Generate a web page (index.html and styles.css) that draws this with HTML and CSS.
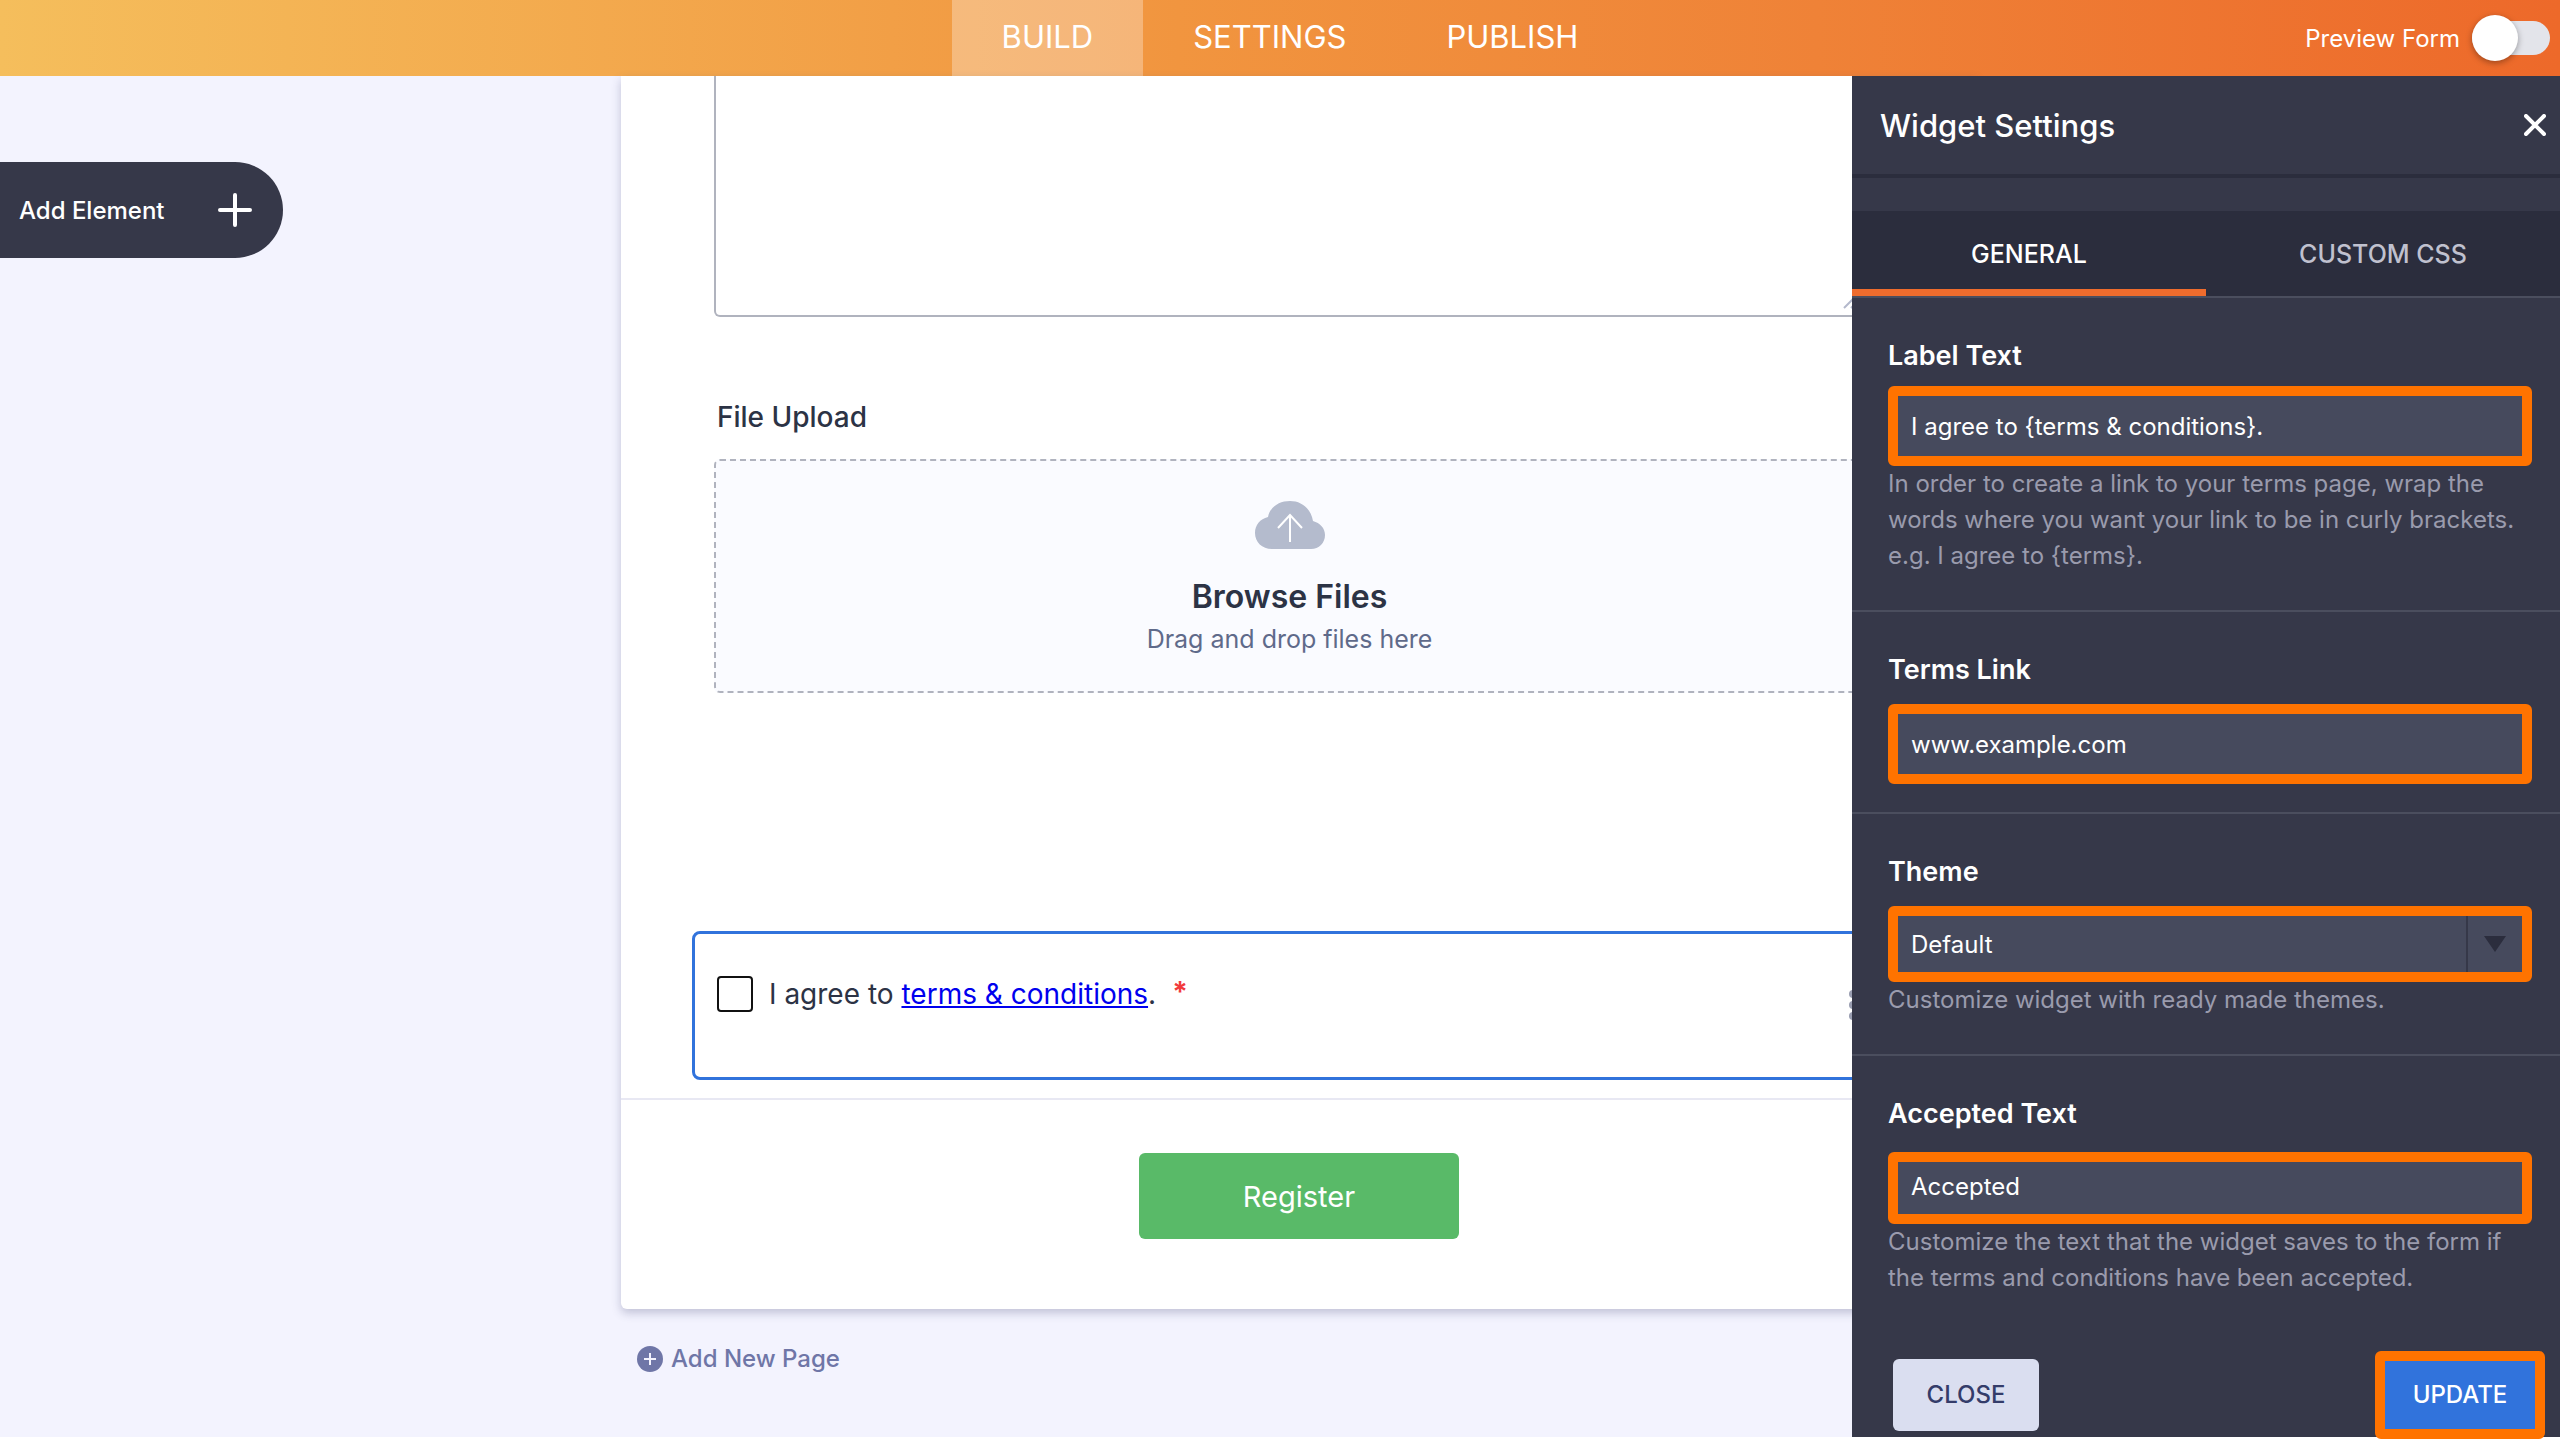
FILE: index.html
```html
<!DOCTYPE html>
<html lang="en">
<head>
    <meta charset="utf-8">
    <title>Form Builder</title>
    <link rel="stylesheet" href="styles.css">
</head>
<body>

    <header class="topbar">
        <nav class="tabs">
            <a href="#build" class="active">BUILD</a>
            <a href="#settings">SETTINGS</a>
            <a href="#publish">PUBLISH</a>
        </nav>
        <div class="preview">
            <label for="preview">Preview Form</label>
            <input type="checkbox" id="preview" class="switch">
        </div>
    </header>

    <main class="workspace">
        <div class="side">
            <button class="add-element">
                Add Element
                <svg width="34" height="34" viewBox="0 0 34 34"><path d="M17 2v30M2 17h30" stroke="#fff" stroke-width="4" stroke-linecap="round"/></svg>
            </button>
        </div>

        <div class="stage">
            <form class="card">
                <div class="questions">
                    <div class="textbox">
                        <textarea aria-label="Comments"></textarea>
                        <svg class="grip" width="20" height="20" viewBox="0 0 20 20"><path d="M1 19L19 1M8 19L19 8" stroke="#b4b9cc" stroke-width="2"/></svg>
                    </div>

                    <div class="question-label">File Upload</div>
                    <div class="dropzone">
                        <svg width="70" height="48" viewBox="0 0 70 48">
                            <path d="M17 48C7 48 0 41 0 32c0-8 5-14 13-16C15 6 24 0 35 0c12 0 21 8 23 20 7 2 12 7 12 14 0 8-6 14-14 14z" fill="#b4bbcd"/>
                            <path d="M35 41V15M23 27l12-13 12 13" fill="none" stroke="#fff" stroke-width="2"/>
                        </svg>
                        <strong>Browse Files</strong>
                        <span>Drag and drop files here</span>
                    </div>

                    <div class="terms">
                        <input type="checkbox" id="agree">
                        <label for="agree">I agree to <a href="#terms">terms &amp; conditions</a>.</label>
                        <span class="required">*</span>
                        <svg class="drag" width="24" height="32" viewBox="0 0 24 32" fill="#9a9eb1">
                            <circle cx="5" cy="5" r="4"/><circle cx="5" cy="16" r="4"/><circle cx="5" cy="27" r="4"/>
                            <circle cx="18" cy="5" r="4"/><circle cx="18" cy="16" r="4"/><circle cx="18" cy="27" r="4"/>
                        </svg>
                    </div>
                </div>
                <div class="submit">
                    <button type="button">Register</button>
                </div>
            </form>

            <button class="add-page">
                <svg width="26" height="26" viewBox="0 0 26 26"><circle cx="13" cy="13" r="13" fill="#6f76a7"/><path d="M13 7v12M7 13h12" stroke="#f3f3fe" stroke-width="2"/></svg>
                Add New Page
            </button>
        </div>

        <aside class="panel">
            <div class="panel-title">
                <h2>Widget Settings</h2>
                <button aria-label="Close">
                    <svg width="22" height="22" viewBox="0 0 22 22"><path d="M2 2l18 18M20 2L2 20" stroke="#fff" stroke-width="4" stroke-linecap="round"/></svg>
                </button>
            </div>

            <div class="panel-tabs">
                <button class="active">GENERAL</button>
                <button>CUSTOM CSS</button>
            </div>

            <section class="field text">
                <label for="labeltext">Label Text</label>
                <input type="text" id="labeltext" class="control" value="I agree to {terms &amp; conditions}.">
                <p>In order to create a link to your terms page, wrap the words where you want your link to be in curly brackets. e.g. I agree to {terms}.</p>
            </section>

            <section class="field link">
                <label for="termslink">Terms Link</label>
                <input type="text" id="termslink" class="control" value="www.example.com">
            </section>

            <section class="field theme">
                <label for="theme">Theme</label>
                <div class="control select">
                    <select id="theme">
                        <option>Default</option>
                    </select>
                    <svg width="22" height="16" viewBox="0 0 22 16"><path d="M0 0h22L11 16z" fill="#2b2d3d"/></svg>
                </div>
                <p>Customize widget with ready made themes.</p>
            </section>

            <section class="field accepted">
                <label for="accepted">Accepted Text</label>
                <input type="text" id="accepted" class="control" value="Accepted">
                <p>Customize the text that the widget saves to the form if the terms and conditions have been accepted.</p>
            </section>

            <div class="panel-footer">
                <button class="close">CLOSE</button>
                <button class="update">UPDATE</button>
            </div>
        </aside>
    </main>

</body>
</html>
```

FILE: styles.css
```css
* {
    box-sizing: border-box;
}

body {
    margin: 0;
    height: 100vh;
    padding-bottom: 6px;
    display: flex;
    flex-direction: column;
    overflow: hidden;
    background-color: white;
    font-family: Inter, "Liberation Sans", sans-serif;
    font-size: 24px;
}

button, input, select, textarea {
    font: inherit;
    margin: 0;
}

button {
    border: none;
    padding: 0;
    background: none;
    cursor: pointer;
}

h2, p {
    margin: 0;
}

svg {
    display: block;
}

/* top bar */

.topbar {
    flex: none;
    height: 76px;
    padding: 0 10px 0 30px;
    display: grid;
    grid-template-columns: 1fr auto 1fr;
    background: linear-gradient(90deg, #f5be5c, #f1953f 46%, #ef8237 71%, #ed692a);
    color: white;
}

.tabs {
    grid-column: 2;
    display: flex;
}

.tabs a {
    padding: 0 50px;
    line-height: 74px;
    font-size: 31px;
    color: white;
    text-decoration: none;
}

.tabs .active {
    background-color: rgba(255, 255, 255, 0.3);
}

.preview {
    display: flex;
    align-items: center;
    justify-content: flex-end;
    gap: 12px;
}

.switch {
    appearance: none;
    width: 78px;
    height: 34px;
    border-radius: 17px;
    background-color: #e3e4ea;
    display: flex;
    align-items: center;
}

.switch::before {
    content: "";
    width: 46px;
    height: 46px;
    flex: none;
    border-radius: 50%;
    background-color: white;
    box-shadow: 0 2px 6px rgba(0, 0, 0, 0.35);
}

/* form */

.workspace {
    flex: 1;
    min-height: 0;
    position: relative;
    display: grid;
    grid-template-columns: 621px minmax(0, 1356px);
    background-color: #f3f3fe;
}

.add-element {
    margin-top: 86px;
    width: 283px;
    height: 96px;
    padding: 0 31px 0 19px;
    display: flex;
    align-items: center;
    justify-content: space-between;
    border-radius: 0 48px 48px 0;
    background-color: #363849;
    color: white;
    font-weight: 500;
}

.card {
    background-color: white;
    border-radius: 0 0 6px 6px;
    box-shadow: 0 4px 10px rgba(60, 64, 110, 0.28);
}

.questions {
    padding: 0 112px 18px 93px;
    border-bottom: 2px solid #e8e8f3;
}

.textbox {
    position: relative;
}

.textbox textarea {
    display: block;
    width: 100%;
    height: 241px;
    border: 2px solid #b0b3be;
    border-top: none;
    border-radius: 0 0 6px 6px;
    resize: none;
}

.grip {
    position: absolute;
    right: 2px;
    bottom: 8px;
}

.question-label {
    margin: 82px 0 24px 3px;
    line-height: 36px;
    font-size: 28px;
    font-weight: 500;
    color: #2c3345;
}

.dropzone {
    height: 234px;
    padding-top: 40px;
    display: flex;
    flex-direction: column;
    align-items: center;
    border: 2px dashed #b0b3be;
    border-radius: 6px;
    background-color: #fafbff;
}

.dropzone strong {
    margin-top: 28px;
    line-height: 40px;
    font-size: 32px;
    font-weight: 600;
    color: #2c3345;
}

.dropzone span {
    margin-top: 4px;
    line-height: 36px;
    font-size: 25px;
    color: #5f6a8a;
}

.terms {
    position: relative;
    height: 149px;
    margin: 238px -22px 0;
    padding: 42px 22px;
    display: flex;
    align-items: flex-start;
    border: 3px solid #3173dc;
    border-radius: 8px;
    font-size: 28px;
    line-height: 36px;
    color: #2c3345;
}

.terms input {
    appearance: none;
    width: 36px;
    height: 36px;
    margin-right: 16px;
    border: 2px solid #111;
    border-radius: 4px;
    background-color: white;
}

.terms a {
    color: #0000ee;
}

.required {
    margin-left: 16px;
    line-height: 32px;
    font-weight: 700;
    color: #f23a3c;
}

.drag {
    position: absolute;
    right: 12px;
    top: 55px;
}

.submit {
    padding: 53px 0 70px;
    text-align: center;
}

.submit button {
    width: 320px;
    height: 86px;
    border-radius: 6px;
    background-color: #59ba68;
    color: white;
    font-size: 29px;
}

.add-page {
    margin: 32px 0 0 16px;
    display: flex;
    align-items: center;
    gap: 8px;
    line-height: 36px;
    font-weight: 500;
    color: #6f76a7;
}

/* widget settings */

.panel {
    position: absolute;
    top: 0;
    right: 0;
    bottom: 0;
    width: 708px;
    display: flex;
    flex-direction: column;
    background-color: #363849;
    color: white;
}

.panel-title {
    height: 102px;
    padding: 0 14px 0 28px;
    display: flex;
    align-items: center;
    justify-content: space-between;
    border-bottom: 4px solid #2b2d3d;
}

.panel-title h2 {
    font-size: 31px;
    font-weight: 500;
}

.panel-tabs {
    height: 87px;
    margin-top: 33px;
    display: flex;
    border-bottom: 2px solid #4b4e5e;
    background-color: #2b2d3d;
}

.panel-tabs button {
    flex: 1;
    padding-top: 7px;
    border-bottom: 7px solid transparent;
    font-size: 25px;
    font-weight: 500;
    color: #c0c1cf;
}

.panel-tabs .active {
    border-bottom-color: #ef6c2d;
    color: white;
}

.field {
    padding: 40px 28px 36px 36px;
    border-bottom: 2px solid #4b4e5e;
}

.field.link {
    padding-bottom: 28px;
}

.field.accepted {
    border-bottom: none;
}

.field label {
    display: block;
    margin-bottom: 16px;
    line-height: 36px;
    font-size: 27px;
    font-weight: 600;
}

.control {
    display: block;
    width: 100%;
    height: 80px;
    padding: 0 13px;
    border: 10px solid #ff7300;
    border-radius: 6px;
    background-color: #464a5d;
    color: white;
}

.text label {
    margin-bottom: 12px;
}

.theme .control {
    height: 76px;
}

.accepted label {
    margin-bottom: 20px;
}

.accepted .control {
    height: 72px;
    padding-bottom: 4px;
}

.select {
    position: relative;
    padding: 0;
}

.select select {
    appearance: none;
    width: calc(100% - 54px);
    height: 100%;
    padding: 0 13px;
    border: none;
    border-right: 2px solid #363849;
    background: none;
    color: white;
}

.select svg {
    position: absolute;
    right: 16px;
    top: 20px;
}

.field p {
    line-height: 36px;
    color: #9a9bad;
}

.panel-footer {
    flex: 1;
    min-height: 0;
    padding: 20px 15px 0 41px;
    display: flex;
    align-items: center;
    justify-content: space-between;
}

.panel-footer button {
    flex: none;
    font-weight: 500;
}

.close {
    width: 146px;
    height: 72px;
    border-radius: 6px;
    background-color: #dadef0;
    color: #343c6a;
}

.update {
    width: 170px;
    height: 88px;
    border: 10px solid #ff7300;
    border-radius: 6px;
    background-color: #3173dc;
    color: white;
}
```
